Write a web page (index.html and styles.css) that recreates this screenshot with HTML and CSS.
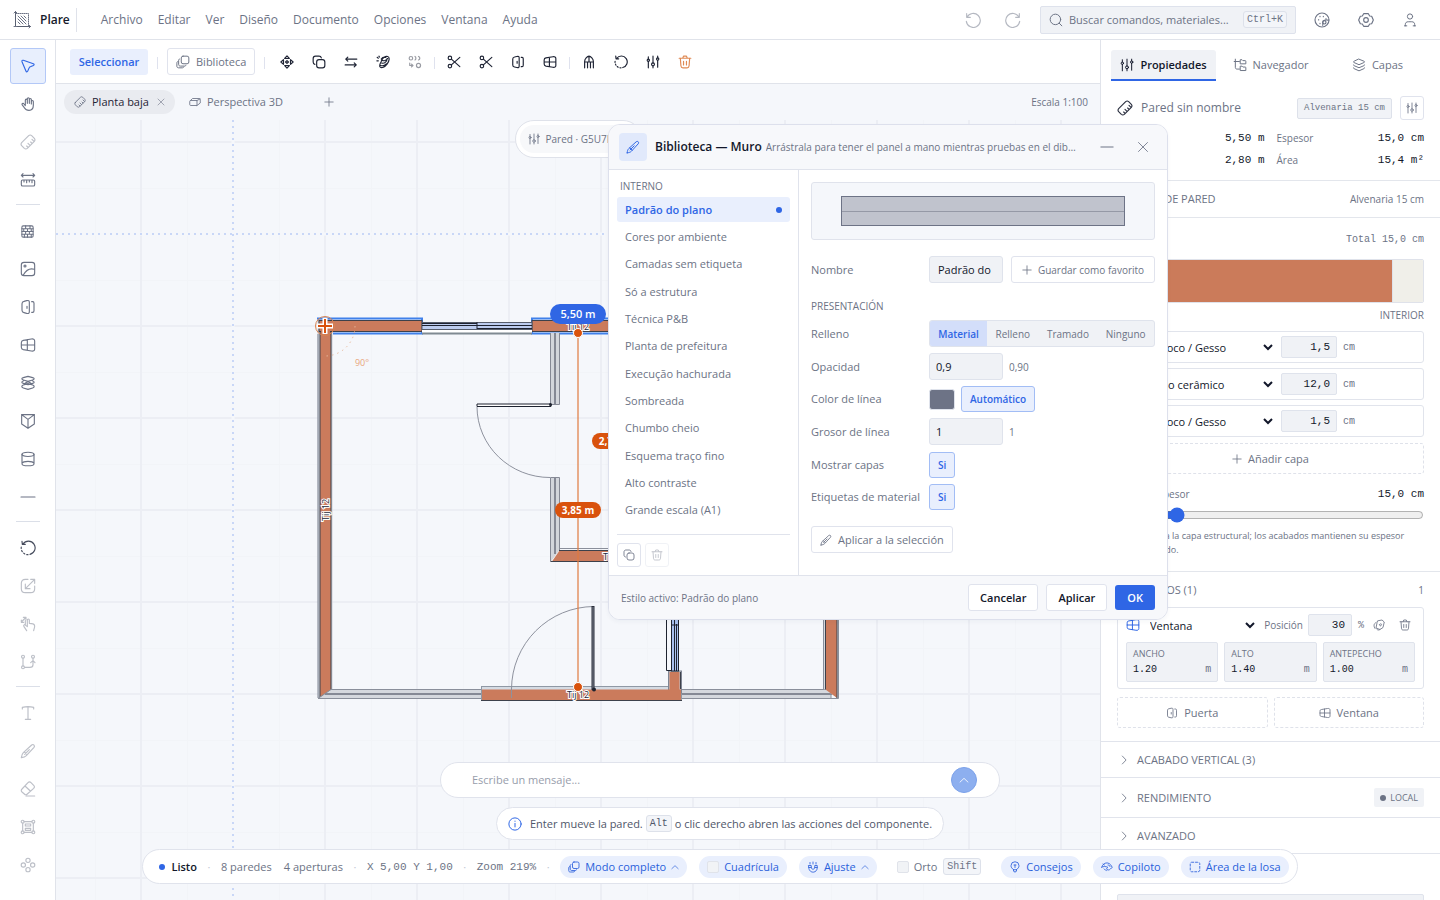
FILE: index.html
```html
<!DOCTYPE html>
<html lang="es">
<head>
<meta charset="utf-8">
<title>Plare</title>
<link rel="stylesheet" href="styles.css">
</head>
<body>
<svg class="sprite" aria-hidden="true">
  <symbol id="cursor" viewBox="0 0 24 24"><path d="M3 5.500C2.500 3.800 3.600 3 5 3.500L20 8.500c1.600.6 1.600 2 .1 2.700l-4.600 2c-1 .4-1.500.9-1.900 1.900l-2 4.600c-.7 1.600-2.100 1.500-2.700-.1z"/></symbol>
  <symbol id="hand" viewBox="0 0 24 24"><path d="M8 13V6.200a1.500 1.500 0 0 1 3 0V11V4.200a1.500 1.500 0 0 1 3 0V11V5.200a1.500 1.500 0 0 1 3 0V12V8.200a1.500 1.500 0 0 1 3 0V14c0 5-2.500 7.500-6.500 7.500c-4 0-5.500-1.500-7-4L3.300 13.400a1.500 1.500 0 0 1 2.400-1.800L8 14.500"/></symbol>
  <symbol id="ruler" viewBox="0 0 24 24"><path d="M2.500 13L13 2.500a3.500 3.500 0 0 1 4.500 0l4 4a3.500 3.500 0 0 1 0 4.500L11 21.500a3.500 3.500 0 0 1-4.500 0l-4-4a3.500 3.500 0 0 1 0-4.500zM12 20l-2-2M15 17l-3-3M18 14l-2-2M21 11l-3-3"/></symbol>
  <symbol id="measure" viewBox="0 0 24 24"><path d="M2 5h20M4.500 2.500L2 5l2.500 2.500M19.500 2.500L22 5l-2.500 2.500M4 12h16a2 2 0 0 1 2 2v5a2 2 0 0 1-2 2H4a2 2 0 0 1-2-2v-5a2 2 0 0 1 2-2zM6 12v3M10 12v4M14 12v3M18 12v4"/></symbol>
  <symbol id="brick" viewBox="0 0 24 24"><rect x="3" y="3" width="18" height="18" rx="2"/><path d="M3 7.500h18M3 12h18M3 16.500h18M9 3v4.500M16 3v4.500M6 7.500V12M12 7.500V12M18 7.500V12M9 12v4.500M15 12v4.500M7 16.500V21M12 16.500V21M18 16.500V21"/></symbol>
  <symbol id="image" viewBox="0 0 24 24"><rect x="2" y="2" width="20" height="20" rx="4"/><circle cx="7.500" cy="7.500" r="1.500"/><path d="M5 21c4-7 9-11 16.500-8.500"/></symbol>
  <symbol id="door" viewBox="0 0 24 24"><path d="M3 7c0-2.500.6-3 3-3.500l4-1C13 2 14 2.500 14 5v14c0 2.500-1 3-4 2.500l-4-1C3.600 20 3 19.500 3 17zM10.500 11v3M17.500 4h1.500C20.500 4 21 5 21 6.500v11c0 1.500-.5 2.500-2 2.500H17.500"/></symbol>
  <symbol id="window" viewBox="0 0 24 24"><path d="M2 8.500C2 6 2.500 5.500 5 5L17 3c3-.4 5 .3 5 3v12c0 2.700-2 3.400-5 3L5 19c-2.500-.5-3-1-3-3.500zM2 12h20M11 4v16"/></symbol>
  <symbol id="layers" viewBox="0 0 24 24"><path d="M12 2l8.500 3.500c1.300.6 1.300 1.700 0 2.300L12 11.500 3.500 7.800c-1.300-.6-1.300-1.700 0-2.300zM2.500 12c0 .5.400.8 1 1.100l8.500 3.600 8.500-3.600c.6-.3 1-.6 1-1.100M2.500 17c0 .6.400.9 1 1.200l8.500 3.800 8.500-3.800c.6-.3 1-.6 1-1.200"/></symbol>
  <symbol id="slabs" viewBox="0 0 24 24"><path d="M12 2l7 2c3 .9 3 2.700 0 3.600l-7 2-7-2C2 6.700 2 4.900 5 4zM12 14.500l7-2c3-.9 3-2.700 0-3.600M12 14.500l-7-2c-3-.9-3-2.700 0-3.600M12 21.500l7-2c3-.9 3-3.700 0-4.600l-7-2-7 2c-3 .9-3 3.700 0 4.600zM8 12l4-2 4 2"/></symbol>
  <symbol id="roof" viewBox="0 0 24 24"><path d="M2.500 2.500h19v14L12 23l-9.500-6.500zM2.500 2.500L12 9.500l9.500-7M12 9.500V23"/></symbol>
  <symbol id="column" viewBox="0 0 24 24"><ellipse cx="12" cy="5" rx="9" ry="3.200"/><path d="M3 5v14c0 4.200 18 4.200 18 0V5M3 18.500c2-4 16-4 18 0"/></symbol>
  <symbol id="minus" viewBox="0 0 24 24"><path d="M1.500 12h21"/></symbol>
  <symbol id="rotate" viewBox="0 0 24 24"><path d="M3 2l.5 4.500H8M4.500 6A10 10 0 1 1 15 21.500"/><path d="M12 22a10 10 0 0 1-10-12" stroke-dasharray="2 3"/></symbol>
  <symbol id="scale" viewBox="0 0 24 24"><path d="M12 2H8C4 2 2 4 2 8v8c0 4 2 6 6 6h8c4 0 6-2 6-6v-4M22 2L8.500 15.500M8 9v7h7M16 2h6V8"/></symbol>
  <symbol id="gesture" viewBox="0 0 24 24"><path d="M10 22l-4-6c-1.500-2.500 1-4 2.500-2L11 16V6c0-2 3-2 3 0v5c3 0 8 1 8 4 0 3-1 4-1.500 7M8 12V7M2 9l6-6M2 6v3.500h3.500M5 2h4v3.500"/></symbol>
  <symbol id="path" viewBox="0 0 24 24"><circle cx="4.500" cy="4" r="2.200"/><circle cx="19.500" cy="4" r="2.200"/><circle cx="4.500" cy="20" r="2.200"/><path d="M4.500 6v12M7 20h8c3 0 4.500-1 4.500-4V6M16 13l3.500-3 3 3"/></symbol>
  <symbol id="text" viewBox="0 0 24 24"><path d="M3.500 6V3.500C9 2 15 2 20.500 3.500V6M12 3V21.500M8 21.500h8"/></symbol>
  <symbol id="brush" viewBox="0 0 24 24"><path d="M2 22c.5-4 1-5.500 3-7.500L17.500 3c2.500-2 5.500 1 3.500 3.500L9.500 19c-2 2-3.500 2.500-7.500 3zM6.500 13.500l4 4M7 17l7-7"/></symbol>
  <symbol id="eraser" viewBox="0 0 24 24"><path d="M3 12l9-9.500c1.500-1.500 3-1.500 4.500 0l4 4c1.500 1.500 1.500 3 0 4.500L11 19.500c-1.500 1.500-3 1.500-4.500 0L3 16.500c-1.500-1.500-1.500-3 0-4.500zM7.500 7.500l8 7.500M9 22.500h13"/></symbol>
  <symbol id="frame" viewBox="0 0 24 24"><circle cx="4" cy="4" r="2.200"/><circle cx="20" cy="4" r="2.200"/><circle cx="4" cy="20" r="2.200"/><circle cx="20" cy="20" r="2.200"/><path d="M6 4h12M6 20h12M4 6v12M20 6v12M8 7.500h8v3H8zM8 14h8v3H8z"/></symbol>
  <symbol id="nodes" viewBox="0 0 24 24"><circle cx="12" cy="5" r="3.200"/><circle cx="12" cy="19" r="3.200"/><circle cx="5" cy="12" r="3.200"/><circle cx="19" cy="12" r="3.200"/></symbol>
  <symbol id="undo" viewBox="0 0 24 24"><path d="M2.500 2.500V8H8M3 8a10.500 10.500 0 1 1-1 6"/></symbol>
  <symbol id="redo" viewBox="0 0 24 24"><path d="M21.500 2.500V8H16M21 8a10.500 10.500 0 1 0 1 6"/></symbol>
  <symbol id="search" viewBox="0 0 24 24"><circle cx="11" cy="11" r="9"/><path d="M17.500 17.500L22 22"/></symbol>
  <symbol id="palette" viewBox="0 0 24 24"><circle cx="12" cy="12" r="10.500"/><circle cx="15.500" cy="15.500" r="2.500"/><path d="M9 6.500v.5M14 6.500v.5M7 11.500v.5M9 17v.5M18 10v.5M13 20c1-3-1-4 1-6.500s5-1 8-1.500"/></symbol>
  <symbol id="gear" viewBox="0 0 24 24"><path d="M8.500 2.500h7L17.500 6l3 .3L23 12l-2.500 5.700-3 .3-2 3.500h-7L6.500 18l-3-.3L1 12l2.500-5.700 3-.3z"/><circle cx="12" cy="12" r="3.500"/></symbol>
  <symbol id="user" viewBox="0 0 24 24"><circle cx="12" cy="6" r="4.500"/><path d="M4 22v-2.500c0-3 2-4.500 5-4.500h6c3 0 5 1.500 5 4.500V22M2.500 22h4M17.500 22h4"/></symbol>
  <symbol id="stack" viewBox="0 0 24 24"><rect x="9" y="2" width="13" height="13" rx="3"/><path d="M6 7c-1 0-1.500.8-1.500 2v7c0 2 1 3 3 3h7c1.500 0 2.500-.5 2.500-1.500M3 11c-1 .6-1.500 1.500-1.500 3v5c0 2 1 3 3 3h6c1.500 0 2.500-.5 3-1.500"/></symbol>
  <symbol id="move" viewBox="0 0 24 24"><path d="M12 1.500L16 6H8zM12 22.500L16 18H8zM1.500 12L6 8v8zM22.500 12L18 8v8zM12 9.500l2.500 2.500-2.500 2.500L9.500 12z"/></symbol>
  <symbol id="copy" viewBox="0 0 24 24"><rect x="8" y="8" width="14" height="14" rx="4"/><path d="M16 5c-.5-2-1.500-3-4-3H6C3.500 2 2 3.500 2 6v6c0 2.500 1 3.500 3 4"/></symbol>
  <symbol id="swap" viewBox="0 0 24 24"><path d="M3 7h19M6.500 3.500L3 7l3.500 3.500M21 17H2M17.500 13.500L21 17l-3.500 3.500"/></symbol>
  <symbol id="mirror" viewBox="0 0 24 24"><path d="M9 11c1-6 7-9.500 11-8.500s3 8-1 13-9 8-12 5c-1.500-2 0-6 2-9.500zM10 14c5 1 9-3 9-8M9 7c2-3 5-4 8-3M11 9c2 2 7 0 9-3M2 4l2 1.500M1.500 10H4M5 2l1 1.500M8 18c3 1 7 0 10-3"/></symbol>
  <symbol id="array" viewBox="0 0 24 24"><circle cx="5" cy="5.500" r="3"/><path d="M12 2.500c2 1 2 5 0 6M18 2.500c3 1 3 5 0 6M3 14v4h5M6 15.500L8.500 18 6 20.500"/><circle cx="18" cy="18" r="3.500"/></symbol>
  <symbol id="cut" viewBox="0 0 24 24"><circle cx="5" cy="5" r="3"/><circle cx="5" cy="19" r="3"/><path d="M7.500 7L22 20M7.500 17L22 4"/></symbol>
  <symbol id="arch" viewBox="0 0 24 24"><path d="M4.500 22V11c0-4 4.500-9 7.500-9s7.500 5 7.500 9v11M9.500 22v-10M14.500 22v-10M5 12h14M12 2v10"/></symbol>
  <symbol id="sliders" viewBox="0 0 24 24"><path d="M4 3v4M4 11v11M12 2v12M12 19v3M20 2v3M20 9v12"/><circle cx="4" cy="9" r="2"/><circle cx="12" cy="16" r="2.500"/><circle cx="20" cy="7" r="2"/></symbol>
  <symbol id="trash" viewBox="0 0 24 24"><path d="M2 5.500h20M8 5.500L9.500 2h5L16 5.500M4 5.500l1 13c.2 2.500 1 3.500 3.500 3.500h7c2.500 0 3.300-1 3.500-3.500l1-13M9.500 11v6M14.500 11v6"/></symbol>
  <symbol id="cube" viewBox="0 0 24 24"><path d="M1.500 11c0-1.500.5-2 2-2H16v10H3.500c-1.500 0-2-.5-2-2zM3 9L7 5h13.500c1.500 0 2 .5 2 2v7L16 19M16 9l6-3"/></symbol>
  <symbol id="x" viewBox="0 0 24 24"><path d="M3 3l18 18M21 3L3 21"/></symbol>
  <symbol id="plus" viewBox="0 0 24 24"><path d="M12 2v20M2 12h20"/></symbol>
  <symbol id="tree" viewBox="0 0 24 24"><path d="M4 2v14c0 2 1 3 3 3h4M2 6h9M13 3h2.500l1.500 1.500h4c1 0 1 .5 1 1.500v4h-9zM13 14h2.500l1.500 1.500h4c1 0 1 .5 1 1.500v4.500h-9z"/></symbol>
  <symbol id="right" viewBox="0 0 24 24"><path d="M8 2.500l9 9.500-9 9.500"/></symbol>
  <symbol id="up" viewBox="0 0 24 24"><path d="M2.500 17l9.500-9 9.500 9"/></symbol>
  <symbol id="flip" viewBox="0 0 24 24"><path d="M10 3.500l8-1.500 4.500 4-2.500 11-6 4-8-3 2-10zM13 11c2-3 5-1 4 1s-3 3-4 0zM6 7c-5 2-5 8-2 12M14 21c-2 2-5 1-6 0"/></symbol>
  <symbol id="info" viewBox="0 0 24 24"><circle cx="12" cy="12" r="10.500"/><path d="M12 11v6M12 7v.5"/></symbol>
  <symbol id="magnet" viewBox="0 0 24 24"><path d="M3.500 9h5v4c0 4.500 7 4.500 7 0V9h5v4c0 12.500-17 12.500-17 0zM3.500 13h5M15.500 13h5M6 3v3M12 2v4M18 3v3"/></symbol>
  <symbol id="bulb" viewBox="0 0 24 24"><path d="M8.500 17C6 15 4 12.500 4 9.500a8 8 0 0 1 16 0c0 3-2 5.500-4.500 7.500zM9 17v3c0 2.500 6 2.500 6 0v-3M12 8v5M10 8h4"/></symbol>
  <symbol id="pilot" viewBox="0 0 24 24"><path d="M1.500 12c2-6 7-9 12-8s7 5 9 9c-3 1-4 5-8 5s-4-4-1-5.500c-4-2-9-2-12 0zM6 16c2 2 4 2 5 3M14 8c2 0 4 1 4 3M7 8L4 6"/></symbol>
  <symbol id="area" viewBox="0 0 24 24"><rect x="2.500" y="2.500" width="19" height="19" rx="3" stroke-dasharray="4 3.500"/></symbol>
  <symbol id="logo" viewBox="0 0 18 18"><path d="M2.500 0v15.500H18" stroke="#596071"/><path d="M3 2.500h12.500v13" stroke-dasharray="1 1"/><path d="M5 5l8 8M8 5l5 5M5 8l5 5M11 5l2 2M5 11l2 2" stroke-width="1"/><path d="M1 2l1.500-1.500L4 2M16 14l1.500 1.500L16 17M1 15.500h3"/></symbol>
</svg>

<div class="app">
<header class="topbar">
  <svg class="logo"><use href="#logo"/></svg>
  <strong class="brand">Plare</strong>
  <nav class="menu">
    <button>Archivo</button><button>Editar</button><button>Ver</button><button>Diseño</button><button>Documento</button><button>Opciones</button><button>Ventana</button><button>Ayuda</button>
  </nav>
  <div class="top-actions">
    <button class="iconbtn faint" aria-label="Deshacer"><svg class="i16"><use href="#undo"/></svg></button>
    <button class="iconbtn faint" aria-label="Rehacer"><svg class="i16"><use href="#redo"/></svg></button>
    <button class="search"><svg class="i14"><use href="#search"/></svg><span>Buscar comandos, materiales...</span><kbd>Ctrl+K</kbd></button>
    <button class="iconbtn wide" aria-label="Tema"><svg class="i16"><use href="#palette"/></svg></button>
    <button class="iconbtn wide" aria-label="Ajustes"><svg class="i16"><use href="#gear"/></svg></button>
    <button class="iconbtn wide" aria-label="Cuenta"><svg class="i14"><use href="#user"/></svg></button>
  </div>
</header>

<div class="workspace">
  <nav class="rail" aria-label="Herramientas">
    <button class="active" aria-label="Seleccionar"><svg><use href="#cursor"/></svg></button>
    <button aria-label="Mano"><svg><use href="#hand"/></svg></button>
    <button class="off" aria-label="Regla"><svg><use href="#ruler"/></svg></button>
    <button aria-label="Cota"><svg><use href="#measure"/></svg></button>
    <hr>
    <button aria-label="Pared"><svg class="s14"><use href="#brick"/></svg></button>
    <button aria-label="Imagen"><svg><use href="#image"/></svg></button>
    <button aria-label="Puerta"><svg><use href="#door"/></svg></button>
    <button aria-label="Ventana"><svg><use href="#window"/></svg></button>
    <button aria-label="Losa"><svg><use href="#slabs"/></svg></button>
    <button aria-label="Techo"><svg><use href="#roof"/></svg></button>
    <button aria-label="Pilar"><svg><use href="#column"/></svg></button>
    <button aria-label="Línea"><svg><use href="#minus"/></svg></button>
    <hr>
    <button class="dark" aria-label="Rotar"><svg><use href="#rotate"/></svg></button>
    <button class="off" aria-label="Escalar"><svg><use href="#scale"/></svg></button>
    <button class="off" aria-label="Gesto"><svg><use href="#gesture"/></svg></button>
    <button class="off" aria-label="Trazado"><svg><use href="#path"/></svg></button>
    <hr>
    <button class="off" aria-label="Texto"><svg><use href="#text"/></svg></button>
    <button class="off" aria-label="Pincel"><svg><use href="#brush"/></svg></button>
    <button class="off" aria-label="Borrador"><svg><use href="#eraser"/></svg></button>
    <button class="off" aria-label="Marco"><svg><use href="#frame"/></svg></button>
    <button class="off" aria-label="Nodos"><svg><use href="#nodes"/></svg></button>
  </nav>

  <main class="center">
    <div class="toolbar">
      <button class="mode">Seleccionar</button>
      <i class="tsep"></i>
      <button class="outline lib"><svg class="i14"><use href="#stack"/></svg>Biblioteca</button>
      <i class="tsep"></i>
      <div class="tools">
        <button aria-label="Mover"><svg class="i14"><use href="#move"/></svg></button>
        <button aria-label="Copiar"><svg class="i14"><use href="#copy"/></svg></button>
        <button aria-label="Desfasar"><svg class="i14"><use href="#swap"/></svg></button>
        <button aria-label="Espejo"><svg class="i14"><use href="#mirror"/></svg></button>
        <button class="off" aria-label="Matriz"><svg class="i14"><use href="#array"/></svg></button>
        <i class="tsep"></i>
        <button aria-label="Cortar"><svg class="i14"><use href="#cut"/></svg></button>
        <button aria-label="Dividir"><svg class="i14"><use href="#cut"/></svg></button>
        <button aria-label="Puerta"><svg class="i14"><use href="#door"/></svg></button>
        <button aria-label="Ventana"><svg class="i14"><use href="#window"/></svg></button>
        <i class="tsep"></i>
        <button aria-label="Arco"><svg class="i14"><use href="#arch"/></svg></button>
        <button aria-label="Rotar"><svg class="i14"><use href="#rotate"/></svg></button>
        <button aria-label="Propiedades"><svg class="i14"><use href="#sliders"/></svg></button>
        <button class="danger" aria-label="Eliminar"><svg class="i14"><use href="#trash"/></svg></button>
      </div>
    </div>
    <div class="viewtabs">
      <button class="vtab on"><svg class="i12"><use href="#ruler"/></svg>Planta baja<svg class="i8"><use href="#x"/></svg></button>
      <button class="vtab"><svg class="i12"><use href="#cube"/></svg>Perspectiva 3D</button>
      <button class="addtab" aria-label="Añadir vista"><svg class="i10"><use href="#plus"/></svg></button>
      <span class="scale">Escala 1:100</span>
    </div>
    <div class="canvas">
      <svg class="plan">
        <defs>
          <pattern id="grid" x="95" y="96" width="92" height="92" patternUnits="userSpaceOnUse">
            <path d="M.5 0V92M0 .5H92" stroke="#f2f4f8" fill="none"/>
            <path d="M46 0V92M0 46H92" stroke="#eceef4" stroke-width="2" fill="none"/>
          </pattern>
        </defs>
        <g transform="translate(-56 -120)">
          <rect x="56" y="120" width="4000" height="3000" fill="url(#grid)"/>
          <path d="M56 234H4000M233 120V4000" stroke="#f5f7fb" stroke-width="3"/>
          <path d="M56 234H4000M233 120V4000" stroke="#c9d7f7" stroke-width="2" stroke-dasharray="2 4"/>
          <!-- outer walls -->
          <path d="M317.500 319H332.500V690L318 698.500z" fill="#cdd0d8"/>
          <path d="M318 334V698" stroke="#7f8593"/>
          <path d="M320 326H331V690L320 697.500z" fill="#cb7b5c" stroke="#3d414b" stroke-width="1"/>
          <path d="M331 689.500H482V698.500H318z" fill="#d5d8de" stroke="#8a8f9b"/>
          <path d="M325 694H482" stroke="#858995" stroke-width="2"/>
          <rect x="681" y="689.500" width="150" height="9" fill="#d5d8de" stroke="#8a8f9b"/>
          <path d="M681 694H832" stroke="#858995" stroke-width="2"/>
          <path d="M823.500 560V689.500M838.500 560V698.500H824" fill="none" stroke="#8a8f9b"/>
          <path d="M824 560H838V698L824 689z" fill="#d5d8de"/>
          <path d="M825.500 560H837V698L825.500 689.500z" fill="#cb7b5c"/>
          <path d="M825.500 560V689.500M837 560V698" stroke="#3d414b"/>
          <rect x="481.500" y="686.500" width="200" height="14" fill="#d5dbe3" stroke="#8f98a4"/>
          <rect x="668.500" y="671" width="13" height="22" fill="#c3c7cf" stroke="#7f8593"/>
          <path d="M482 689.500H669.500V672H679.500V689.500H681V700H482z" fill="#cb7b5c"/>
          <path d="M481 700.500H682M680.500 672V689" stroke="#3d414b"/>
          <!-- top wall -->
          <path d="M317 318.500H422V333.500H333M640 318.500H532V333.500H640" fill="none" stroke="#3f80ea" stroke-width="2"/>
          <rect x="319" y="320.500" width="103" height="11" fill="#cb7b5c" stroke="#3d414b"/>
          <rect x="532" y="320.500" width="108" height="11" fill="#cb7b5c" stroke="#3d414b"/>
          <rect x="321" y="321" width="9" height="13" fill="#cb7b5c"/>
          <rect x="422" y="329" width="110" height="4" fill="#fff"/>
          <rect x="422" y="322.500" width="110" height="7" fill="#bdcdf0" stroke="#565d6b"/>
          <path d="M422 323.500H477M422 325.500H532M477 328.500H532" stroke="#1e2330"/>
          <path d="M477 322V329" stroke="#1e2330"/>
          <path d="M422 333.500H532" stroke="#7f8a92" stroke-width="2"/>
          <!-- inner walls -->
          <path d="M550.500 333V404.500H559.500V333M550.500 562V477.500H559.500V550" fill="#d3d6dc" stroke="#858995"/>
          <path d="M555 333V404M555 478V554" stroke="#858995" stroke-width="2"/>
          <path d="M559.500 548.500H640" stroke="#8a8f9b"/>
          <path d="M559.500 550.500H640V561.500H552z" fill="#cb7b5c"/>
          <path d="M559 550.500H640M551 561.500H640" stroke="#3d414b" stroke-width="1"/>
          <!-- doors -->
          <path d="M477 407A73 71 0 0 0 550 477.500" fill="none" stroke="#8e929e"/>
          <path d="M477 404H551V406.500H477z" fill="#fff" stroke="#1e2330"/>
          <circle cx="550.500" cy="404.500" r="1.500" fill="#1e2330"/>
          <path d="M594 606.500A83 83 0 0 0 511.500 689V698" fill="none" stroke="#8e929e"/>
          <rect x="592" y="606.500" width="2" height="83" fill="#7f8491" stroke="#2b2f3b"/>
          <circle cx="594" cy="689.500" r="2" fill="#1e2330"/>
          <!-- right window -->
          <path d="M666.500 600V670.500H672" fill="none" stroke="#1e2330"/>
          <rect x="671.500" y="600" width="7" height="71" fill="#a9c0ee" stroke="#1e2330"/>
          <path d="M674.500 600V671M676.500 624V671M671 625H679" stroke="#1e2330"/>
          <!-- labels and measures -->
          <g class="wall-label">
            <text x="578" y="330">Tij 12</text>
            <text x="578" y="698">Tij 12</text>
            <text x="614" y="560">Tij 12</text>
            <text transform="translate(329 510) rotate(-90)">Tij 12</text>
          </g>
          <path d="M578 338V682" stroke="#e0793f" stroke-opacity=".6" stroke-width="2"/>
          <circle cx="578" cy="333" r="4.500" fill="#d9520d" stroke="#fff"/>
          <circle cx="578" cy="687" r="4.500" fill="#d9520d" stroke="#fff"/>
          <path d="M355 326A30 30 0 0 1 325 356" fill="none" stroke="#e8b99c" stroke-dasharray="1.500 4"/>
          <text class="angle" x="362" y="366">90°</text>
          <circle cx="325" cy="326" r="9.500" fill="none" stroke="#d9824f"/>
          <path d="M317 326H333M325 318V334" stroke="#fff" stroke-width="5"/>
          <path d="M318 326H332M325 319V333" stroke="#d9520d" stroke-width="2"/>
          <g class="tag">
            <rect x="550" y="304" width="56" height="20" rx="10" fill="#3066e4"/><text class="big" x="578" y="318">5,50 m</text>
            <rect x="592" y="433" width="46" height="16" rx="8" fill="#d9520d"/><text x="615" y="445">2,75 m</text>
            <rect x="555" y="502" width="46" height="16" rx="8" fill="#d9520d"/><text x="578" y="514">3,85 m</text>
          </g>
        </g>
      </svg>
      <div class="selpill"><span><svg class="i12"><use href="#sliders"/></svg>Pared · G5U7K2</span></div>
    </div>
  </main>

  <aside class="panel">
    <div class="ptabs">
      <button class="on"><svg class="i14"><use href="#sliders"/></svg>Propiedades</button>
      <button><svg class="i14"><use href="#tree"/></svg>Navegador</button>
      <button><svg class="i14"><use href="#layers"/></svg>Capas</button>
    </div>
    <div class="summary">
      <div class="name-row">
        <svg class="i16"><use href="#ruler"/></svg><span class="name">Pared sin nombre</span><span class="mat">Alvenaria 15 cm</span>
        <button class="outline sq" aria-label="Ajustar"><svg class="i12"><use href="#sliders"/></svg></button>
      </div>
      <dl class="facts">
        <div><dt>Longitud</dt><dd>5,50 m</dd></div><div><dt>Espesor</dt><dd>15,0 cm</dd></div>
        <div><dt>Altura</dt><dd>2,80 m</dd></div><div><dt>Área</dt><dd>15,4 m²</dd></div>
      </dl>
    </div>
    <section>
      <h3 class="sec">TIPO DE PARED <span>Alvenaria 15 cm</span></h3>
      <div class="comp">
        <div class="total">Total 15,0 cm</div>
        <div class="bar"><i class="cream"></i><i class="clay"></i><i class="cream"></i></div>
        <div class="sides"><span>EXTERIOR</span><span>INTERIOR</span></div>
        <div class="rows">
          <div class="lrow"><select aria-label="Material 1"><option>Reboco / Gesso</option></select><input aria-label="Espesor 1" value="1,5"><span>cm</span></div>
          <div class="lrow"><select aria-label="Material 2"><option>Tijolo cerâmico</option></select><input aria-label="Espesor 2" value="12,0"><span>cm</span></div>
          <div class="lrow"><select aria-label="Material 3"><option>Reboco / Gesso</option></select><input aria-label="Espesor 3" value="1,5"><span>cm</span></div>
        </div>
        <button class="dashed"><svg class="i10"><use href="#plus"/></svg>Añadir capa</button>
        <div class="thick"><label for="thick">Ajustar espesor</label><output>15,0 cm</output></div>
        <input class="range" type="range" id="thick" min="0" max="100" value="18">
        <p class="note">Se aplicará a la capa estructural; los acabados mantienen su espesor personalizado.</p>
      </div>
    </section>
    <section>
      <h3 class="sec bare">HUECOS (1) <span>1</span></h3>
      <div class="holes">
        <div class="card">
          <div class="hrow">
            <svg class="i14 blue"><use href="#window"/></svg>
            <select aria-label="Tipo"><option>Ventana</option></select>
            <label for="pos">Posición</label><input id="pos" value="30"><span class="pct">%</span>
            <button aria-label="Invertir"><svg class="i12"><use href="#flip"/></svg></button>
            <button aria-label="Eliminar"><svg class="i12"><use href="#trash"/></svg></button>
          </div>
          <div class="dims">
            <label>ANCHO<span><input value="1.20"><small>m</small></span></label>
            <label>ALTO<span><input value="1.40"><small>m</small></span></label>
            <label>ANTEPECHO<span><input value="1.00"><small>m</small></span></label>
          </div>
        </div>
        <div class="pair">
          <button class="dashed"><svg class="i12"><use href="#door"/></svg>Puerta</button>
          <button class="dashed"><svg class="i12"><use href="#window"/></svg>Ventana</button>
        </div>
      </div>
    </section>
    <button class="fold"><svg class="i10"><use href="#right"/></svg>ACABADO VERTICAL (3)</button>
    <button class="fold tall"><svg class="i10"><use href="#right"/></svg>RENDIMIENTO<span class="local"><i></i>LOCAL</span></button>
    <button class="fold"><svg class="i10"><use href="#right"/></svg>AVANZADO</button>
    <div class="tail"></div>
  </aside>
</div>

<div class="dock">
  <form class="chat"><input aria-label="Mensaje" placeholder="Escribe un mensaje..."><button type="button" aria-label="Enviar"><svg class="i10"><use href="#up"/></svg></button></form>
  <div class="hint"><svg class="i14 blue"><use href="#info"/></svg><span>Enter mueve la pared.</span><kbd>Alt</kbd><span>o clic derecho abren las acciones del componente.</span></div>
  <footer class="status">
    <i class="dot"></i><b>Listo</b><em>·</em>
    <span>8 paredes</span><span class="gap">4 aperturas</span><em>·</em>
    <span class="mono">X 5,00 Y 1,00</span><em>·</em><span class="mono">Zoom 219%</span><em>·</em>
    <button class="chip"><svg class="i12"><use href="#stack"/></svg>Modo completo<svg class="i8"><use href="#up"/></svg></button>
    <label class="chip"><input type="checkbox">Cuadrícula</label>
    <button class="chip"><svg class="i12"><use href="#magnet"/></svg>Ajuste<svg class="i8"><use href="#up"/></svg></button>
    <label class="orto"><input type="checkbox">Orto <kbd>Shift</kbd></label>
    <button class="chip"><svg class="i12"><use href="#bulb"/></svg>Consejos</button>
    <button class="chip"><svg class="i12"><use href="#pilot"/></svg>Copiloto</button>
    <button class="chip"><svg class="i12"><use href="#area"/></svg>Área de la losa</button>
  </footer>
</div>

<div class="dialog" role="dialog" aria-labelledby="dlg-title">
  <header>
    <span class="tile"><svg class="i14"><use href="#brush"/></svg></span>
    <h2 id="dlg-title">Biblioteca — Muro</h2>
    <p>Arrástrala para tener el panel a mano mientras pruebas en el dibujo de la planta.</p>
    <button aria-label="Minimizar"><svg class="i14"><use href="#minus"/></svg></button>
    <button aria-label="Cerrar"><svg class="i12"><use href="#x"/></svg></button>
  </header>
  <div class="dbody">
    <div class="styles">
      <h4>INTERNO</h4>
      <div class="list">
        <button class="on">Padrão do plano<i></i></button>
        <button>Cores por ambiente</button>
        <button>Camadas sem etiqueta</button>
        <button>Só a estrutura</button>
        <button>Técnica P&amp;B</button>
        <button>Planta de prefeitura</button>
        <button>Execução hachurada</button>
        <button>Sombreada</button>
        <button>Chumbo cheio</button>
        <button>Esquema traço fino</button>
        <button>Alto contraste</button>
        <button>Grande escala (A1)</button>
      </div>
      <div class="listfoot">
        <button class="outline sq" aria-label="Duplicar"><svg class="i12"><use href="#copy"/></svg></button>
        <button class="outline sq off" aria-label="Eliminar"><svg class="i12"><use href="#trash"/></svg></button>
      </div>
    </div>
    <div class="editor">
      <div class="preview"><div></div></div>
      <div class="frow"><label for="nm">Nombre</label><input id="nm" class="nm" value="Padrão do plano"><button class="outline fav"><svg class="i10"><use href="#plus"/></svg>Guardar como favorito</button></div>
      <h4>PRESENTACIÓN</h4>
      <div class="frows">
        <div class="frow"><span>Relleno</span><div class="seg"><button class="on">Material</button><button>Relleno</button><button>Tramado</button><button>Ninguno</button></div></div>
        <div class="frow"><label for="op">Opacidad</label><input id="op" value="0,9"><small>0,90</small></div>
        <div class="frow low"><span>Color de línea</span><button class="swatch" aria-label="Color"></button><button class="toggle">Automático</button></div>
        <div class="frow"><label for="gr">Grosor de línea</label><input id="gr" value="1"><small>1</small></div>
        <div class="frow"><span>Mostrar capas</span><button class="toggle">Si</button></div>
        <div class="frow low"><span>Etiquetas de material</span><button class="toggle">Si</button></div>
      </div>
      <button class="outline apply"><svg class="i12"><use href="#brush"/></svg>Aplicar a la selección</button>
    </div>
  </div>
  <footer><span>Estilo activo: Padrão do plano</span><button class="outline strong">Cancelar</button><button class="outline strong">Aplicar</button><button class="primary">OK</button></footer>
</div>
</div>
</body>
</html>
```
FILE: styles.css
```css
* { box-sizing: border-box; }
html, body { height: 100%; margin: 0; }
body {
  font: 11px/16px "Open Sans", "Noto Sans", sans-serif;
  color: #6c7385;
  background: #fff;
  overflow: hidden;
}
button, input, select { font: inherit; color: inherit; margin: 0; }
button { background: none; border: 0; padding: 0; display: inline-flex; align-items: center; justify-content: center; white-space: nowrap; }
h2, h3, h4, p, dl, dd { margin: 0; font-weight: 400; }
svg { fill: none; stroke: currentColor; stroke-width: 1.700; stroke-linecap: round; stroke-linejoin: round; flex: none; }
kbd, .mono, .mat, dd, output, .total { font-family: "Liberation Mono", monospace; }
.sprite { position: absolute; width: 0; height: 0; }
.i16 { width: 16px; height: 16px; }
.i14 { width: 14px; height: 14px; }
.i12 { width: 12px; height: 12px; }
.i10 { width: 10px; height: 10px; stroke-width: 2; }
.i8 { width: 8px; height: 8px; stroke-width: 2; }
.blue { color: #2f66e5; }
.outline { border: 1px solid #e0e3ed; border-radius: 3px; background: #fff; }
.sq { width: 24px; height: 24px; }
.off { opacity: .45; }
.dashed { border: 1px dashed #dfe2ea; border-radius: 3px; height: 31px; gap: 6px; width: 100%; }

.app { position: relative; height: 100%; display: flex; flex-direction: column; }

/* top bar */
.topbar { height: 40px; flex: none; display: flex; align-items: center; border-bottom: 1px solid #e0e3ea; padding: 0 8px 0 13px; }
.logo { width: 18px; height: 18px; stroke-width: 1; }
.brand { font-size: 12px; font-weight: 600; color: #151a2b; margin-left: 9px; padding-right: 6px; line-height: 24px; border-right: 1px solid #dfe2ea; }
.menu { display: flex; gap: 15px; margin-left: 24px; font-size: 12px; }
.top-actions { margin-left: auto; display: flex; align-items: center; }
.iconbtn { width: 40px; height: 28px; }
.iconbtn.wide { width: 44px; }
.iconbtn.faint { opacity: .5; }
.search { width: 256px; height: 28px; margin: 0 4px 0 7px; background: #f0f2f6; border: 1px solid #dee2ec; border-radius: 2px; padding: 0 8px; gap: 6px; justify-content: flex-start; }
.search span { flex: 1; text-align: left; }
kbd { font-size: 10px; line-height: 15px; border: 1px solid #dde1ea; border-radius: 3px; padding: 0 3px; background: #f3f5f9; }

.workspace { flex: 1; min-height: 0; display: flex; }

/* tool rail */
.rail { width: 56px; flex: none; border-right: 1px solid #e0e3ea; padding-top: 8px; display: flex; flex-direction: column; align-items: center; gap: 2px; overflow: hidden; }
.rail button { width: 36px; height: 36px; flex: none; border-radius: 3px; }
.rail svg { width: 16px; height: 16px; }
.rail .s14 { width: 15px; height: 15px; }
.rail .active { background: #e8effd; border: 1px solid #b3c8f7; color: #2f66e5; }
.rail .dark { color: #454b5c; }
.rail hr { width: 24px; height: 1px; border: 0; background: #dbdfe8; margin: 4px 0 6px; flex: none; }

/* centre column */
.center { flex: 1; min-width: 0; display: flex; flex-direction: column; background: #f5f7fb; }
.toolbar { height: 44px; flex: none; background: #fff; border-bottom: 1px solid #e0e3ea; display: flex; align-items: center; padding-left: 14px; }
.mode { height: 26px; min-width: 78px; background: #e9effd; color: #2f66e5; border-radius: 3px; font-weight: 600; }
.lib { height: 27px; padding: 0 8px; gap: 6px; }
.tsep { width: 1px; height: 12px; background: #dfe2ee; margin: 3px 9px 0; flex: none; }
.tools { display: flex; align-items: center; color: #1f2435; margin-left: -3px; }
.tools svg { stroke-width: 2; }
.tools button { width: 32px; height: 28px; }
.tools .tsep { margin: 3px 3px 0; }
.tools .danger { color: #e08a55; }
.viewtabs { height: 36px; flex: none; display: flex; align-items: center; padding: 0 12px 0 8px; }
.vtab { height: 24px; padding: 0 10px; gap: 6px; border-radius: 12px; }
.vtab.on { background: #e9ebf0; color: #1f2435; font-weight: 500; }
.vtab.on .i8 { margin-left: 2px; color: #7c8292; }
.vtab .i12 { color: #6c7385; }
.vtab + .vtab { margin-left: 4px; }
.addtab { width: 24px; height: 24px; margin-left: 24px; }
.scale { margin-left: auto; font-size: 10px; }
.canvas { flex: 1; min-height: 0; position: relative; overflow: hidden; display: flex; justify-content: center; align-items: flex-start; }
.plan { position: absolute; inset: 0; width: 100%; height: 100%; stroke: none; stroke-linecap: butt; stroke-linejoin: miter; stroke-width: 1; }
.plan text { text-anchor: middle; }
.wall-label { font-size: 9px; fill: #23273a; stroke: #fff; stroke-width: 2px; paint-order: stroke; }
.angle { font-size: 9px; fill: #e9a67c; }
.tag text { font-size: 10px; font-weight: 700; fill: #fff; }
.tag .big { font-size: 11px; font-weight: 600; }
.selpill { position: relative; background: #fff; border: 1px solid #dfe2ea; border-radius: 19px; padding: 4px; min-width: 127px; font-size: 10px; }
.selpill span { display: flex; align-items: center; gap: 6px; height: 28px; padding: 0 8px; border-radius: 14px; background: #f7f8fa; }

/* properties panel */
.panel { width: 340px; flex: none; border-left: 1px solid #e0e3ea; overflow: hidden; }
.ptabs { display: flex; gap: 2px; padding: 10px 10px 0; }
.ptabs button { flex: 1; height: 31px; gap: 6px; font-weight: 500; border-bottom: 2px solid transparent; border-radius: 3px 3px 0 0; }
.ptabs .on { background: #f0f2f6; color: #12172a; border-color: #2f66e5; font-weight: 600; }
.summary { padding: 15px 16px 12px; }
.name-row { display: flex; align-items: center; gap: 8px; }
.name-row .i16 { color: #2b3040; }
.name { font-size: 12px; flex: 1; }
.mat { font-size: 9px; line-height: 19px; border: 1px solid #dde1ea; background: #f1f3f7; padding: 0 6px; border-radius: 2px; }
.facts { display: grid; grid-template-columns: 1fr 1fr; column-gap: 12px; row-gap: 6px; margin-top: 10px; }
.facts div { display: flex; justify-content: space-between; font-size: 10px; }
.facts dd, output { color: #12172a; font-size: 11px; }
.sec { height: 38px; border: solid #e3e6ec; border-width: 1px 0; display: flex; justify-content: space-between; align-items: center; padding: 0 16px 0 36px; font-size: 11px; font-weight: 500; }
.sec span { font-size: 10px; font-weight: 400; }
.sec.bare { border-bottom: 0; height: 36px; }
.comp { padding: 14px 16px; }
.total { text-align: right; font-size: 10px; }
.bar { height: 44px; margin-top: 11px; display: flex; border: 1px solid #dfe2ea; border-radius: 2px; overflow: hidden; }
.bar i { flex: 10; }
.bar .clay { flex: 80; background: #cb7b5a; }
.bar .cream { background: #f0efe9; border-left: 1px solid #dfe2ea; }
.sides { display: flex; justify-content: space-between; font-size: 10px; margin-top: 4px; }
.rows { display: flex; flex-direction: column; gap: 5px; margin-top: 8px; }
.lrow { height: 32px; border: 1px solid #e1e4ec; border-radius: 3px; display: flex; align-items: center; padding-left: 25px; }
select { border: 0; background: transparent; color: #12172a; padding: 0; }
.lrow select { width: 133px; }
.lrow input, .hrow input { width: 56px; height: 22px; margin-left: 5px; text-align: right; padding: 0 6px; font: 11px "Liberation Mono", monospace; color: #12172a; background: #f0f2f6; border: 1px solid #dfe3ec; border-radius: 2px; }
.lrow span { font: 10px "Liberation Mono", monospace; margin-left: 6px; }
.comp > .dashed { margin-top: 6px; }
.thick { display: flex; justify-content: space-between; margin-top: 12px; font-size: 10px; }
.range { display: block; width: 100%; height: 16px; margin: 5px 0 0; accent-color: #2f66e5; }
.note { font-size: 9px; line-height: 14px; margin-top: 6px; }
.holes { padding: 0 16px 13px; }
.card { border: 1px solid #e1e4ec; border-radius: 3px; padding: 6px 8px; }
.hrow { display: flex; align-items: center; height: 22px; }
.hrow > * { flex: none; }
.hrow select { flex: 1; min-width: 0; margin-left: 6px; }
.hrow label { font-size: 10px; margin-left: 6px; }
.hrow input { width: 44px; margin-left: 5px; }
.pct { font: 10px "Liberation Mono", monospace; margin: 0 5px 0 6px; }
.hrow button { width: 20px; }
.hrow button + button { margin-left: 6px; }
.dims { display: grid; grid-template-columns: repeat(3, 1fr); gap: 6px; margin-top: 6px; }
.dims label { background: #f0f2f6; border: 1px solid #dfe3ec; border-radius: 2px; padding: 4px 6px; font-size: 9px; line-height: 14px; height: 40px; }
.dims span { display: flex; justify-content: space-between; align-items: center; }
.dims input { border: 0; padding: 0; width: 50px; height: 16px; background: none; font: 10px "Liberation Mono", monospace; color: #12172a; }
.dims small { font: 10px "Liberation Mono", monospace; }
.pair { display: flex; gap: 6px; margin-top: 8px; }
.fold { width: 100%; height: 36px; border-top: 1px solid #e1e4ec; justify-content: flex-start; padding: 0 16px 0 18px; gap: 8px; font-weight: 500; }
.fold.tall { height: 40px; }
.local { margin-left: auto; background: #f0f2f6; border-radius: 2px; font-size: 9px; height: 19px; padding: 0 6px; display: flex; align-items: center; gap: 4px; }
.local i { width: 6px; height: 6px; border-radius: 50%; background: #6c7385; }
.tail { border-top: 1px solid #e1e4ec; padding: 40px 16px 0; }
.tail::after { content: ""; display: block; height: 40px; border: 1px solid #dfe3ec; background: #f0f2f6; border-radius: 2px; }

/* bottom dock */
.dock { position: absolute; left: 0; right: 0; bottom: 16px; display: flex; flex-direction: column; align-items: center; gap: 9px; pointer-events: none; }
.dock > * { pointer-events: auto; background: #fff; border: 1px solid #e0e3ec; border-radius: 18px; display: flex; align-items: center; white-space: nowrap; }
.chat { width: 560px; max-width: 90%; height: 36px; padding: 0 22px 0 31px; margin: 0; }
.chat input { flex: 1; border: 0; outline: 0; padding: 0; background: none; }
.chat input::placeholder { color: #979dab; }
.chat button { width: 26px; height: 26px; border-radius: 50%; background: #8dafef; color: #fff; border: 1px solid #7ba1ea; }
.hint { height: 33px; padding: 0 11px; color: #4f5669; }
.hint svg { margin-right: 8px; }
.hint kbd { margin: 0 3px; }
.status { height: 35px; padding: 0 8px 0 16px; }
.status .dot { width: 6px; height: 6px; border-radius: 50%; background: #2f66e5; margin-right: 6px; }
.status b { color: #12172a; font-weight: 600; }
.status em { font-style: normal; color: #c3c8d4; width: 24px; text-align: center; }
.status .gap { margin-left: 12px; }
.status .mono { font-size: 11px; }
.chip { height: 22px; border-radius: 11px; background: #e9effd; color: #2a5fdb; padding: 0 8px; gap: 5px; display: inline-flex; align-items: center; }
.chip + .chip { margin-left: 12px; }
.orto { display: flex; align-items: center; margin: 0 20px; gap: 5px; }
.orto kbd { margin-left: 1px; }
.status input { appearance: none; width: 12px; height: 12px; margin: 0; border: 1px solid #e0e3ea; background: #f1f3f6; border-radius: 2px; }

/* library dialog */
.dialog { position: absolute; top: 124px; right: 272px; width: 560px; border: 1px solid #dde0ec; border-radius: 12px; background: #fff; overflow: hidden; box-shadow: 0 2px 4px rgba(30, 40, 70, .04); }
.dialog header { height: 45px; background: #f7f8fb; border-bottom: 1px solid #e0e3ec; display: flex; align-items: center; padding: 0 6px 0 10px; }
.tile { width: 28px; height: 28px; background: #e1e9fb; color: #2f66e5; border-radius: 4px; display: flex; align-items: center; justify-content: center; }
.dialog h2 { font-size: 12px; font-weight: 600; color: #12172a; margin: 0 4px 0 8px; white-space: nowrap; }
.dialog header p { flex: 1; min-width: 0; overflow: hidden; text-overflow: ellipsis; white-space: nowrap; font-size: 10px; margin-right: 8px; }
.dialog header button { width: 36px; height: 28px; }
.dbody { display: flex; }
.styles { width: 190px; border-right: 1px solid #e0e3ec; padding: 8px; display: flex; flex-direction: column; }
.dialog h4 { font-size: 10px; line-height: 16px; }
.styles h4 { padding-left: 3px; margin-bottom: 3px; }
.list { flex: 1; display: flex; flex-direction: column; justify-content: space-between; }
.list button { height: 25px; padding: 0 8px; justify-content: space-between; border-radius: 3px; }
.list .on { background: #e9effd; color: #2f66e5; font-weight: 600; }
.list i { width: 6px; height: 6px; border-radius: 50%; background: #2f66e5; }
.listfoot { border-top: 1px solid #e0e3ec; margin-top: 11px; padding-top: 8px; display: flex; gap: 4px; }
.editor { flex: 1; min-width: 0; padding: 12px 12px 22px; display: flex; flex-direction: column; align-items: stretch; }
.preview { height: 58px; border: 1px solid #e0e3ec; border-radius: 3px; background: #f5f7fb; padding: 13px 29px; margin-bottom: 16px; }
.preview div { height: 30px; border: 1px solid #6d7386; background: linear-gradient(#9599a6, #9599a6) 0 14px / 100% 1px no-repeat #c0c3cd; }
.frow { display: flex; align-items: center; height: 27px; }
.frow.low { height: 26px; }
.frow > :first-child { width: 118px; flex: none; }
.frow input { width: 74px; height: 27px; border: 1px solid #dfe3ec; background: #f0f2f6; border-radius: 3px; padding: 0 6px; color: #12172a; }
.frow .nm { padding: 0 8px; }
.fav { height: 27px; flex: 1; margin-left: 8px; gap: 6px; font-size: 10px; }
.editor h4 { margin: 15px 0 6px; }
.frows { display: flex; flex-direction: column; gap: 6px; }
.seg { flex: 1; height: 27px; display: flex; border: 1px solid #dfe3ec; border-radius: 3px; background: #f0f2f6; overflow: hidden; }
.seg button { flex: auto; font-size: 10px; }
.seg .on { background: #d3defa; color: #2f66e5; font-weight: 600; }
.frow small { font-size: 10px; margin-left: 6px; }
.swatch { width: 26px; height: 21px; background: #6d7386; border: 1px solid #dfe3ec; border-radius: 3px; margin-right: 6px; }
.toggle { height: 26px; padding: 0 8px; border: 1px solid #a2bdf5; border-radius: 3px; background: #e9effd; color: #2f66e5; font-size: 10px; font-weight: 600; }
.apply { height: 27px; padding: 0 8px; gap: 6px; align-self: flex-start; margin-top: 16px; }
.dialog footer { height: 44px; background: #f7f8fb; border-top: 1px solid #e0e3ec; display: flex; align-items: center; gap: 8px; padding: 0 12px; }
.dialog footer span { flex: 1; font-size: 10px; }
.strong { height: 27px; padding: 0 11px; font-weight: 600; color: #12172a; }
.primary { height: 25px; padding: 0 12px; border-radius: 3px; background: #2f66e5; color: #fff; font-weight: 600; }
```
